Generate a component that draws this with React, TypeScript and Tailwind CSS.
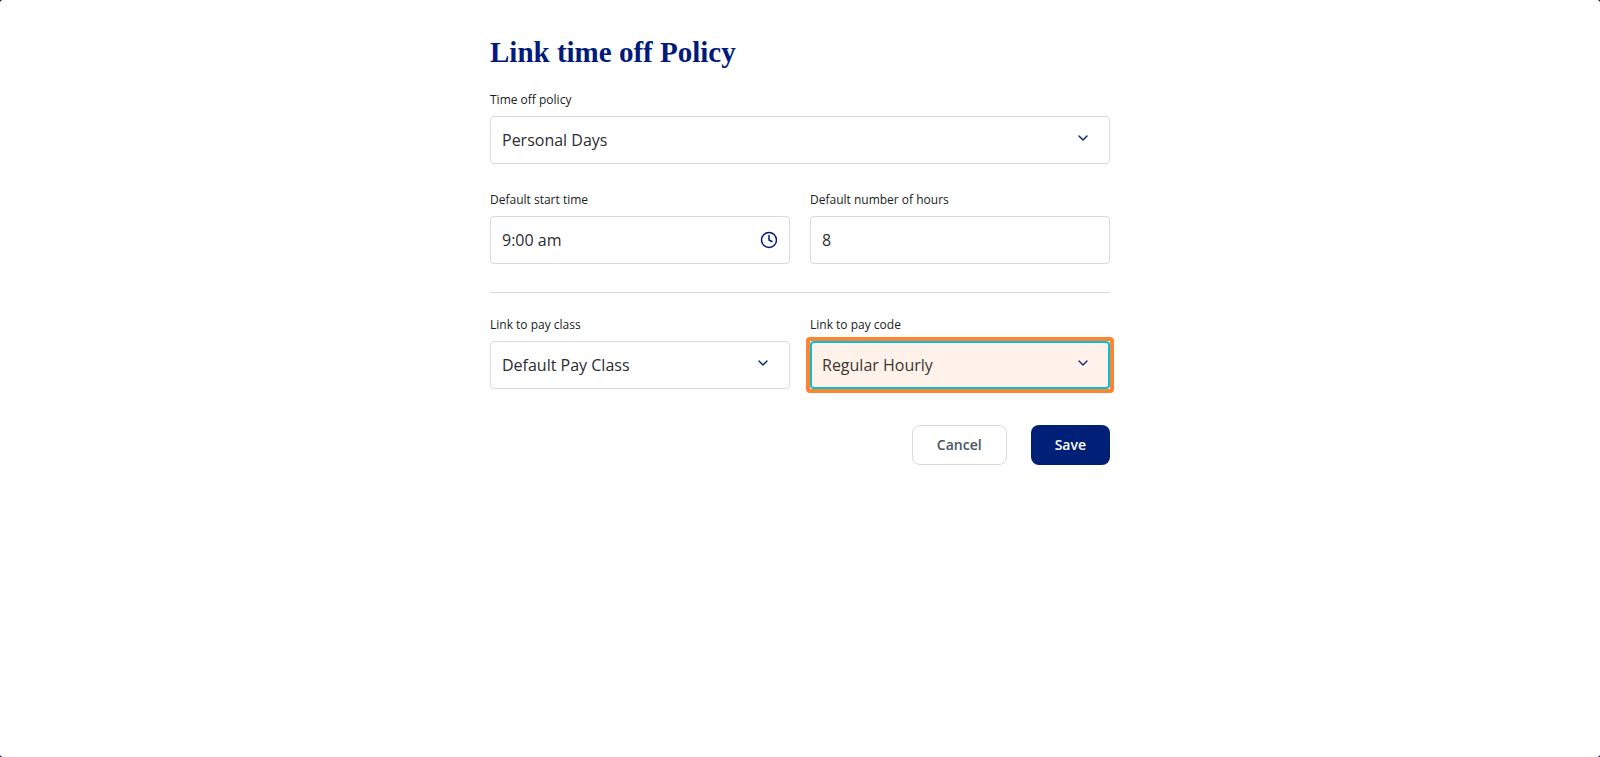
import type { ReactNode } from "react";
import { ChevronDown, Clock } from "lucide-react";

const control =
  "block h-12 w-full appearance-none rounded border border-[#d9dadb] bg-white pl-[11px] pr-12 text-base text-[#2a2d31] outline-none";

function Field({ id, label, children }: { id: string; label: string; children: ReactNode }) {
  return (
    <div className="flex flex-col gap-2">
      <label htmlFor={id} className="text-xs leading-4 font-medium text-[#1a1d21]">
        {label}
      </label>
      {children}
    </div>
  );
}

function SelectField({
  id,
  label,
  value,
  highlighted = false,
}: {
  id: string;
  label: string;
  value: string;
  highlighted?: boolean;
}) {
  return (
    <Field id={id} label={label}>
      <div className="relative">
        <select id={id} defaultValue={value} className={control}>
          <option>{value}</option>
        </select>
        <ChevronDown
          aria-hidden="true"
          strokeWidth={2}
          className="pointer-events-none absolute top-[14px] right-[19px] h-4 w-4 text-[#001a7a]"
        />
        {highlighted && (
          <>
            <div className="pointer-events-none absolute inset-0 rounded border-2 border-[#00c1de] bg-[#ff7f2f]/10" />
            <div className="pointer-events-none absolute -inset-1 rounded border-4 border-[#ff8432]" />
          </>
        )}
      </div>
    </Field>
  );
}

export default function App() {
  return (
    <div className="flex min-h-screen bg-[#00004a] font-['Open_Sans',sans-serif]">
      <main className="flex-1 rounded-[3px] bg-white px-6 pt-8">
        <form className="mx-auto max-w-[620px]" onSubmit={(e) => e.preventDefault()}>
          <h1 className="mb-5 font-['Liberation_Serif',serif] text-[29px] leading-10 font-bold text-[#001a7a]">
            Link time off Policy
          </h1>
          <SelectField id="policy" label="Time off policy" value="Personal Days" />
          <div className="mt-7 grid grid-cols-2 gap-5">
            <Field id="start" label="Default start time">
              <div className="relative">
                <input id="start" type="text" defaultValue="9:00 am" className={control} />
                <Clock
                  aria-hidden="true"
                  className="pointer-events-none absolute top-[15px] right-3 h-[18px] w-[18px] text-[#001a7a]"
                />
              </div>
            </Field>
            <Field id="hours" label="Default number of hours">
              <input id="hours" type="text" defaultValue="8" className={control} />
            </Field>
          </div>
          <hr className="mt-7 border-[#d9dadb]" />
          <div className="mt-6 grid grid-cols-2 gap-5">
            <SelectField id="class" label="Link to pay class" value="Default Pay Class" />
            <SelectField id="code" label="Link to pay code" value="Regular Hourly" highlighted />
          </div>
          <div className="mt-9 flex justify-end gap-6 text-sm font-semibold">
            <button
              type="button"
              className="h-10 rounded-lg border border-[#d9dadb] bg-white px-6 text-[#465562]"
            >
              Cancel
            </button>
            <button type="submit" className="h-10 rounded-lg bg-[#002078] px-6 text-white">
              Save
            </button>
          </div>
        </form>
      </main>
    </div>
  );
}
